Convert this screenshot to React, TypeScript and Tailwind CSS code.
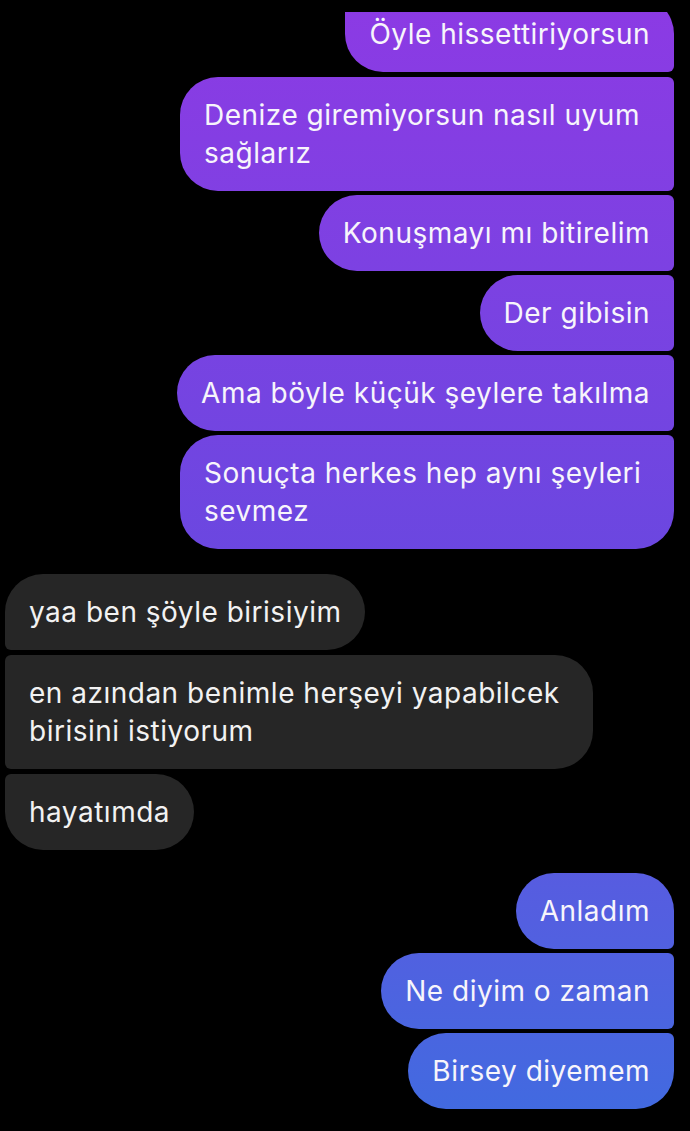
type Pos = "first" | "mid" | "last";

const rightCorners: Record<Pos, string> = {
  first: "rounded-l-[38px] rounded-tr-[38px] rounded-br-[6px]",
  mid: "rounded-l-[38px] rounded-r-[6px]",
  last: "rounded-l-[38px] rounded-tr-[6px] rounded-br-[38px]",
};

const leftCorners: Record<Pos, string> = {
  first: "rounded-r-[38px] rounded-tl-[38px] rounded-bl-[6px]",
  mid: "rounded-r-[38px] rounded-l-[6px]",
  last: "rounded-r-[38px] rounded-tl-[6px] rounded-bl-[38px]",
};

const Sent = ({ text, pos, className = "" }: { text: string; pos: Pos; className?: string }) => (
  <div className="flex justify-end pr-4">
    <div
      className={`max-w-[494px] px-6 py-[19px] text-[28px] leading-[38px] tracking-[0.5px] text-[#f7f5fb] bg-linear-to-b from-[#8c3ae4] via-[#6a47e0] to-[#3f6be0] bg-fixed ${rightCorners[pos]} ${className}`}
    >
      {text}
    </div>
  </div>
);

const Received = ({ text, pos }: { text: string; pos: Pos }) => (
  <div className="flex justify-start pl-[5px]">
    <div
      className={`max-w-[588px] px-6 py-[19px] text-[28px] leading-[38px] tracking-[0.5px] text-[#f2f2f2] bg-[#262626] ${leftCorners[pos]}`}
    >
      {text}
    </div>
  </div>
);

export default function App() {
  return (
    <div
      className="w-[690px] h-[1131px] overflow-hidden bg-black flex flex-col"
      style={{ fontFamily: "Inter, 'Noto Sans', sans-serif" }}
    >
      {/* top bubble is cut off by the screen edge */}
      <div className="shrink-0 mt-[12px] h-[60px] overflow-hidden flex flex-col justify-end">
        <Sent text="Öyle hissettiriyorsun" pos="first" className="shrink-0 rounded-tl-[6px] rounded-tr-[6px]" />
      </div>

      <div className="shrink-0 flex flex-col gap-1 mt-[5px]">
        <Sent text="Denize giremiyorsun nasıl uyum sağlarız" pos="mid" />
        <Sent text="Konuşmayı mı bitirelim" pos="mid" />
        <Sent text="Der gibisin" pos="mid" />
        <Sent text="Ama böyle küçük şeylere takılma" pos="mid" className="max-w-none whitespace-nowrap" />
        <Sent text="Sonuçta herkes hep aynı şeyleri sevmez" pos="last" />
      </div>

      <div className="shrink-0 flex flex-col gap-[5px] mt-[25px]">
        <Received text="yaa ben şöyle birisiyim" pos="first" />
        <Received text="en azından benimle herşeyi yapabilcek birisini istiyorum" pos="mid" />
        <Received text="hayatımda" pos="last" />
      </div>

      <div className="shrink-0 flex flex-col gap-1 mt-[23px]">
        <Sent text="Anladım" pos="first" />
        <Sent text="Ne diyim o zaman" pos="mid" />
        <Sent text="Birsey diyemem" pos="last" />
      </div>
    </div>
  );
}
